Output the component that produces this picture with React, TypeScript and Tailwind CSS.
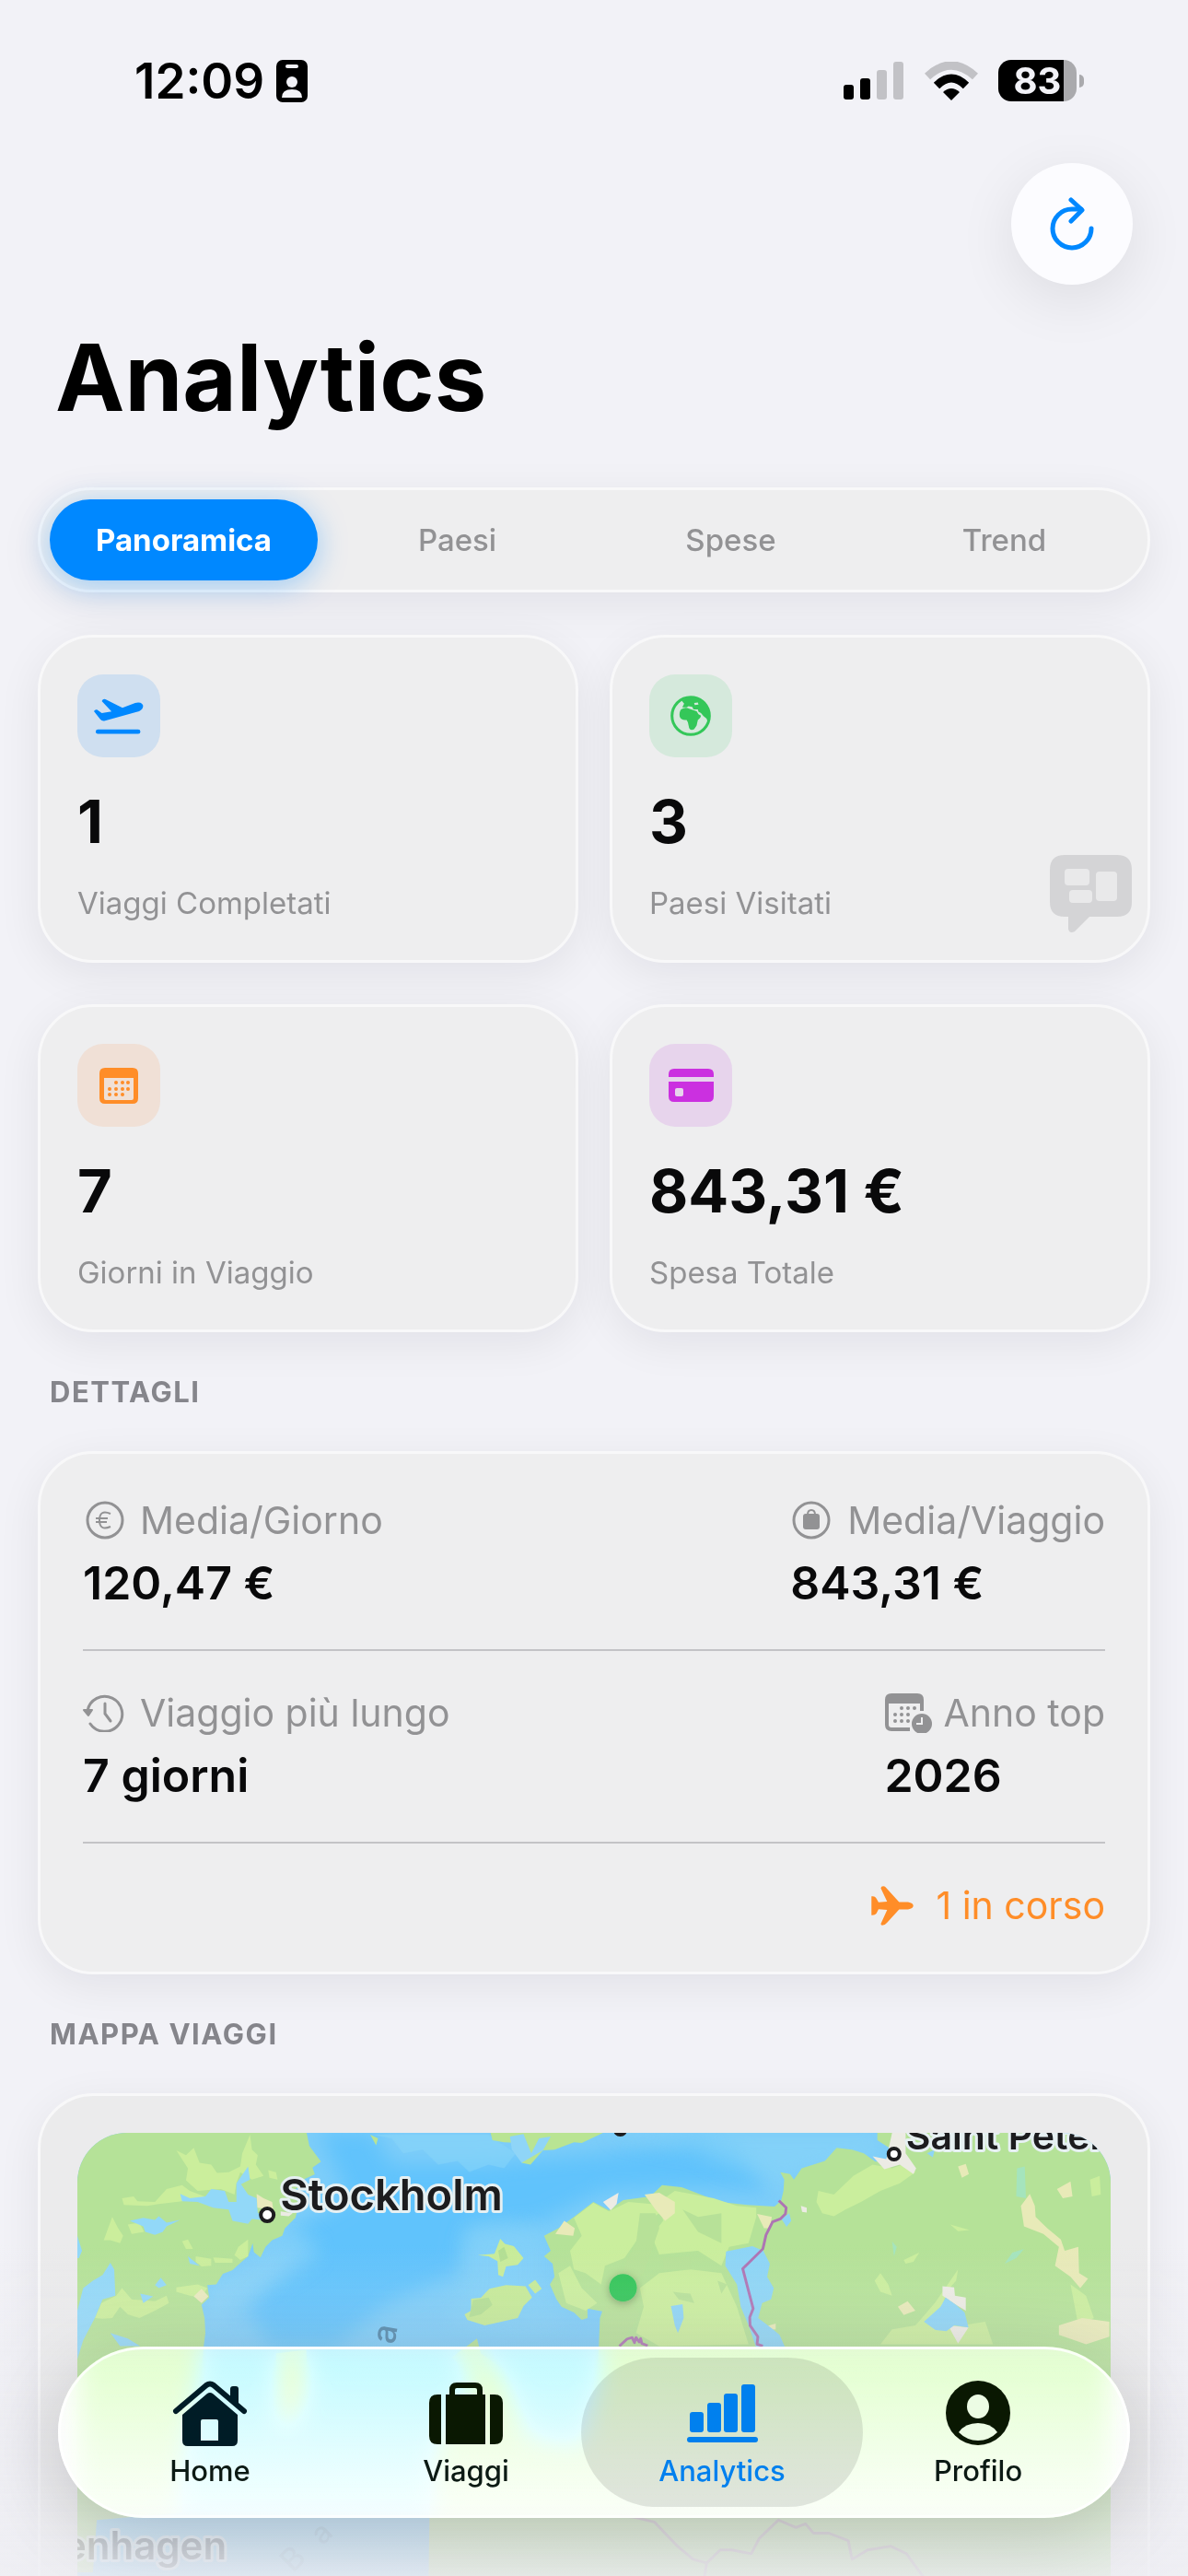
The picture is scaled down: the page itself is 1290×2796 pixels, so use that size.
import { ReactNode, useState } from "react";

const tabs = ["Panoramica", "Paesi", "Spese", "Trend"];

function StatusBar() {
  return (
    <div className="flex h-[177px] items-center justify-between pl-[146px] pr-[113px] pb-[2px]">
      <div className="flex items-center gap-[13px]">
        <span className="text-[53px] leading-[64px] font-semibold text-black">12:09</span>
        <svg className="h-[46px] w-[34px]" viewBox="0 0 34 46">
          <rect width="34" height="46" rx="7" />
          <rect x="10" y="5" width="14" height="4" rx="2" fill="#f2f2f7" />
          <circle cx="17" cy="24" r="6" fill="#f2f2f7" />
          <path d="M6 41q0-9 11-9t11 9z" fill="#f2f2f7" />
        </svg>
      </div>
      <div className="flex items-center gap-[22px]">
        <svg className="h-[42px] w-[66px]" viewBox="0 0 66 42">
          <rect y="25" width="11" height="16" rx="3" />
          <rect x="18" y="18" width="11" height="23" rx="3" />
          <rect x="36" y="9" width="11" height="32" rx="3" fill="#c2c2c6" />
          <rect x="54" width="11" height="41" rx="3" fill="#c2c2c6" />
        </svg>
        <svg className="h-[42px] w-[58px]" viewBox="0 0 58 42">
          <path d="M3 16Q29-8 55 16" fill="none" stroke="#c2c2c6" strokeWidth="9" />
          <path d="M13 26Q29 10 45 26" fill="none" stroke="#000" strokeWidth="9" />
          <path d="M29 42L20 33Q29 25 38 33z" />
        </svg>
        <div className="flex items-center gap-[3px]">
          <div className="flex h-[45px] w-[85px] items-center justify-center rounded-[14px] bg-linear-to-r from-black from-84% to-[#aaaaad] to-84% text-[40px] leading-[45px] font-bold text-[#f2f2f7]">
            83
          </div>
          <div className="h-[14px] w-[5px] rounded-r-full bg-[#aaaaad]" />
        </div>
      </div>
    </div>
  );
}

function PlaneTakeoffIcon() {
  return (
    <svg className="h-[39px] w-[54px]" viewBox="0 0 164 118" fill="currentColor">
      <path d="M0 42Q3 36 10 37L26 48 58 43 26 9Q30 0 38 3L94 31 136 15Q156 10 162 23 163 35 149 42L34 74Q26 75 21 69z" />
      <rect x="6" y="102" width="147" height="15" rx="7" />
    </svg>
  );
}

function GlobeIcon() {
  return (
    <svg className="h-[44px] w-[44px]" viewBox="0 0 130 130" fill="currentColor">
      <circle cx="65" cy="65" r="60" fill="none" stroke="currentColor" strokeWidth="9" />
      <path d="M34 44Q48 36 60 42L84 50 90 60 98 64Q98 72 88 78L84 96 76 108Q64 114 60 104L56 86 52 78Q34 80 30 68 27 54 34 44z" />
      <path
        fillRule="evenodd"
        d="M36 16Q64 0 90 10 126 24 126 66L121 84Q118 82 116 74L106 66 98 56 90 52 88 44 74 44 70 36 58 34 52 38 38 38 44 26zM76 24l12-2 2 7-12 1z"
      />
    </svg>
  );
}

function CalendarIcon() {
  return (
    <svg className="h-[39px] w-[42px]" viewBox="0 0 42 39" fill="currentColor">
      <path
        fillRule="evenodd"
        d="M6 0h30q6 0 6 6v27q0 6-6 6H6q-6 0-6-6V6q0-6 6-6zM5 11v22q0 2 2 2h28q2 0 2-2V11z"
      />
      <path
        d="M18 16h0M25 16h0M31 16h0M11 23h0M18 23h0M25 23h0M31 23h0M11 29h0M18 29h0M25 29h0"
        stroke="currentColor"
        strokeWidth="4"
        strokeLinecap="round"
      />
    </svg>
  );
}

function CreditCardIcon() {
  return (
    <svg className="h-[36px] w-[49px]" viewBox="0 0 49 36" fill="currentColor">
      <path d="M6 0h37q6 0 6 6v3H0V6q0-6 6-6z" />
      <path fillRule="evenodd" d="M0 14h49v16q0 6-6 6H6q-6 0-6-6zm9 7q-2 0-2 2v5q0 2 2 2h5q2 0 2-2v-5q0-2-2-2z" />
    </svg>
  );
}

function EuroCircleIcon() {
  return (
    <svg className="h-[42px] w-[46px]" viewBox="0 0 46 42" fill="none" stroke="currentColor">
      <circle cx="24" cy="21" r="19" strokeWidth="3" />
      <path d="M30 14Q18 9 18 21T30 28M14 19h13M14 23h12" strokeWidth="2" />
    </svg>
  );
}

function BagCircleIcon() {
  return (
    <svg className="h-[42px] w-[46px]" viewBox="0 0 46 42">
      <circle cx="23" cy="21" r="19" fill="none" stroke="currentColor" strokeWidth="3" />
      <rect x="14" y="14" width="18" height="17" rx="3" fill="currentColor" />
      <path d="M19 15q0-5 4-5t4 5" fill="none" stroke="currentColor" strokeWidth="2" />
    </svg>
  );
}

function HistoryIcon() {
  return (
    <svg className="h-[42px] w-[46px]" viewBox="0 0 46 42" fill="none" stroke="currentColor" strokeWidth="3" strokeLinecap="round">
      <path d="M5 19A19 19 0 1 1 8 33" />
      <path d="M24 11v11l6 8" />
      <path d="M1 18h9l-4 6z" fill="currentColor" strokeWidth="2" strokeLinejoin="round" />
    </svg>
  );
}

function CalendarClockIcon() {
  return (
    <svg className="-mr-[4px] h-[43px] w-[52px]" viewBox="0 0 52 43" fill="currentColor">
      <path d="M8 0h28q7 0 7 7v12h-4v-8H5v23q0 3 3 3h20v4H8q-7 0-7-7V7q0-7 7-7z" />
      <path
        d="M19 16h0M26 16h0M33 16h0M12 23h0M19 23h0M26 23h0M12 30h0M19 30h0M26 30h0"
        stroke="currentColor"
        strokeWidth="4"
        strokeLinecap="round"
      />
      <circle cx="41" cy="33" r="11" />
      <path d="M41 26v7h-6" fill="none" stroke="#eeeeef" strokeWidth="2" />
    </svg>
  );
}

function PlaneIcon() {
  return (
    <svg className="h-[43px] w-[46px]" viewBox="0 0 112 106" fill="currentColor">
      <path d="M0 28Q9 26 13 33L19 44 42 42 25 6Q26-1 35 1 38 2 42 8L74 43H98Q112 46 112 53T98 63L74 63 42 98Q36 106 27 105 24 103 26 99L42 64 19 62 13 74Q9 79 0 78z" />
    </svg>
  );
}

type StatCardProps = { icon: ReactNode; tile: string; value: string; label: string };

function StatCard({ icon, tile, value, label }: StatCardProps) {
  return (
    <div className="rounded-[60px] border-[3px] border-[#f8f8f9] bg-[#eeeeef] p-[40px] shadow-[0_12px_48px_rgba(0,0,30,0.07)]">
      <div className={`flex h-[90px] w-[90px] items-center justify-center rounded-[28px] ${tile}`}>{icon}</div>
      <p className="mt-[32px] text-[65px] leading-[76px] font-bold text-[#09090a]">{value}</p>
      <p className="mt-[28px] text-[33px] leading-[44px] text-[#929294]">{label}</p>
    </div>
  );
}

type DetailProps = { icon: ReactNode; label: string; value: string };

function Detail({ icon, label, value }: DetailProps) {
  return (
    <div>
      <dt className="flex items-center gap-[16px] text-[41px] leading-[54px] text-[#929294]">
        {icon}
        {label}
      </dt>
      <dd className="mt-[9px] text-[50px] leading-[64px] font-semibold text-[#09090a]">{value}</dd>
    </div>
  );
}

function SectionTitle({ children }: { children: ReactNode }) {
  return <h2 className="pl-[13px] text-[31px] leading-[37px] font-bold tracking-wider text-[#85858b]">{children}</h2>;
}

function TravelMap() {
  return (
    <svg className="block h-auto w-full" viewBox="0 0 1121 640" fontFamily="Inter, sans-serif">
      <defs>
        <filter id="soft">
          <feGaussianBlur stdDeviation="26" />
        </filter>
        <filter id="dotShadow" x="-50%" y="-50%" width="200%" height="200%">
          <feDropShadow dx="0" dy="2" stdDeviation="5" floodOpacity="0.3" />
        </filter>
      </defs>
      <rect width="1121" height="640" fill="#7dcdf9" />
      <g transform="scale(.4209 .4057) translate(-200 -385)">
        {/* deep water */}
        <g fill="#60c3fc" filter="url(#soft)">
          <path d="M820 380L960 380 1010 470 1250 470 1560 440 1800 400 1900 430 1980 540 1800 530 1560 540 1400 620 1200 640 1180 760 1000 840 860 960 700 960 640 860 720 760 760 640 900 560z" />
        </g>
        <path d="M760 640L830 700 760 760 660 800 580 860 540 940 530 800 640 740z" fill="#8ad3f8" opacity=".7" filter="url(#soft)" />
        <g fill="#8ad6f8" opacity=".5">
          <path d="M960 390L1010 400 1040 440 1090 430 1130 470 1180 460 1210 490 1260 470 1300 480 1330 440 1260 390z" />
          <path d="M1200 640L1290 620 1400 650 1400 800 1480 900 1400 920 1200 910 1140 880 1200 800z" opacity=".7" filter="url(#soft)" />
          <path d="M1560 385L1700 420 1790 430 1860 470 1990 500 2010 570 2040 500 2280 450 2270 385z" filter="url(#soft)" />
        </g>

        {/* Sweden */}
        <path
          fill="#b5e298"
          d="M190 380H790L798 420 828 462 806 478 812 496 786 508 770 530 745 545 772 572 762 612 735 640 728 660 702 672 685 690 672 718 655 704 652 680 640 715 612 740 600 752 575 762 558 790 535 792 540 825 520 845 528 880 530 920 525 960 520 1040 500 1120 480 1250 470 1400 250 1420 240 1560H190z"
        />
        <g fill="#cbee9c">
          <path d="M455 432L480 445 500 425 515 465 545 470 560 492 590 490 620 475 625 440 645 390 650 430 665 445 660 470 680 500 650 510 620 490 610 520 605 550 570 535 510 540 480 512 485 480z" />
          <path d="M315 560L345 555 355 568 400 570 430 535 470 525 490 540 540 560 500 560 470 568 410 575 380 580 320 578z" />
          <path d="M268 672L290 610 305 640 318 660 310 680 285 672zM330 630L360 625 372 650 340 655zM470 675L485 670 498 695 480 695zM505 715L545 722 545 740 520 742 505 730zM550 718L600 722 600 732 555 732z" />
          <path d="M615 690L640 670 640 715 620 725 605 712zM692 485L712 490 716 510 695 505z" />
          <path d="M245 880L262 840 300 820 315 800 340 830 400 835 430 820 436 840 400 860 360 880 330 870 310 850 290 880 265 882z" />
          <path d="M455 798L510 790 535 800 520 825 490 820 455 810z" />
        </g>
        <g fill="#92d8f8">
          <path d="M465 548L490 560 530 555 545 535 580 540 590 570 610 570 610 520 640 475 645 510 622 522 640 550 662 560 665 600 690 600 700 620 650 615 640 628 600 620 590 590 550 585 510 570 470 568z" />
          <path d="M335 620L370 612 400 618 410 608 430 625 465 618 430 635 420 650 400 658 375 650 370 635zM200 660L212 700 204 720 200 720z" />
          <path d="M200 860L215 800 240 780 265 765 285 732 295 750 298 820 265 830 245 880 215 940 200 990zM362 815L395 822 370 840zM400 792L415 772 430 792 410 800zM285 920L330 935 362 955 310 955zM485 715L515 740 490 735z" />
        </g>
        <path d="M662 548L680 560 702 570 705 590 664 585zM500 822L520 802 538 822 520 840z" fill="#e9e9bd" />

        {/* Gotland */}
        <path d="M712 975L790 965 795 1080 760 1170 720 1180 712 1100z" fill="#c6ec99" />

        {/* Finland and the islands */}
        <path d="M1265 385H1555L1500 412 1480 410 1430 430 1400 432 1368 470 1345 465 1358 440 1332 440 1342 412 1300 410 1270 405zM955 390L975 400 970 418z" fill="#b9e493" />
        <path d="M1315 395L1350 388 1370 440 1390 400 1420 395 1400 432 1345 465 1320 430z" fill="#8fd5f7" />
        <path d="M1232 712L1275 708 1290 668 1302 682 1325 688 1350 720 1335 738 1305 742 1297 770 1285 765 1283 728 1260 715z" fill="#c8ec99" />
        <path d="M1215 828L1240 826 1262 802 1305 792 1355 795 1372 825 1350 848 1335 880 1280 893 1250 900 1205 885 1198 870 1215 860zM1362 792L1380 778 1397 802 1380 815z" fill="#c5ea97" />
        <path d="M1285 700L1300 690 1310 720 1290 730zM1220 832L1260 825 1270 845 1240 870 1210 878z" fill="#b3df93" />

        {/* Estonia and Russia */}
        <path
          fill="#b5e298"
          d="M1403 660L1440 640 1480 610 1530 570 1570 592 1607 565 1677 555 1707 525 1757 530 1807 550 1857 570 1927 578 1997 582 2014 566 2020 540 2022 510 2012 490 2037 495 2047 510 2067 480 2097 470 2127 460 2157 425 2197 430 2227 440 2257 462 2300 460 2300 430 2262 405 2262 385H2900V1600H1105L1110 1240 1400 1200 1500 1220 1540 1060 1547 880 1553 862 1515 855 1515 880 1500 885 1480 865 1448 850 1435 830 1418 790 1430 770 1425 735 1403 715 1420 700z"
        />
        {/* Latvian coast */}
        <path d="M1110 1240L1215 1040 1165 985 1230 935 1240 975 1300 1020 1370 1200 1400 1260z" fill="#b5e298" />
        <g fill="#caee9d">
          <path d="M1480 612L1530 572 1570 595 1620 570 1680 575 1700 600 1670 620 1650 660 1610 720 1560 740 1550 790 1510 760 1480 750 1470 700 1500 660z" />
          <path d="M1700 570L1740 540 1840 560 1900 580 1950 585 1950 610 1930 680 1880 690 1860 740 1800 700 1700 710 1680 660 1710 620z" />
          <path d="M1700 760L1780 750 1860 760 1900 850 1930 950 1700 955 1640 920 1660 850 1650 800zM1440 760L1470 740 1500 800 1540 840 1510 860 1460 840z" />
          <path d="M2105 570L2110 540 2150 550 2200 500 2250 470 2300 480 2340 465 2360 490 2320 520 2270 540 2220 570 2180 590 2150 608 2120 600z" />
          <path d="M2255 780L2270 760 2290 790 2300 820 2270 810zM2270 950L2300 910 2360 900 2410 840 2450 780 2470 750 2465 780 2440 810 2430 850 2480 900 2540 890 2560 950zM2760 790L2800 820 2820 880 2780 900zM2810 510L2835 500 2838 550 2815 555zM2330 725L2370 705 2355 730 2335 735zM2450 630L2500 645 2470 648z" />
        </g>
        <g fill="#b7e198">
          <path d="M1650 600L1690 600 1700 640 1680 700 1660 760 1600 800 1610 740 1640 680zM1760 590L1800 610 1860 600 1860 680 1800 650zM1710 720L1780 715 1780 750 1710 750zM1735 810L1780 815 1790 840 1750 830z" />
          <path d="M1560 850L1620 830 1650 870 1600 950 1550 950zM1850 780L1875 790 1860 815z" />
        </g>
        <g fill="#e8eab8">
          <path d="M1662 550L1700 545 1740 570 1740 600 1715 620 1690 590zM1432 655L1455 620 1482 640 1478 660zM1952 602L1990 610 1985 640 1970 640zM1965 905L2000 895 2000 910 1970 912z" />
          <path d="M2632 580L2655 548 2668 580 2670 610 2700 640 2735 670 2745 700 2780 690 2782 760 2805 775 2785 800 2760 770 2720 740 2730 690 2690 655 2640 635zM2725 535L2760 515 2765 555 2740 560zM2470 475L2490 468 2498 495 2480 505zM2315 850L2340 835 2360 860 2330 872zM2730 900L2790 880 2860 890 2860 930 2800 950 2730 925z" />
        </g>
        <path d="M2250 448L2285 455 2300 385H2335L2335 440 2362 480 2355 495 2320 470 2280 482zM2430 795L2460 798 2462 820 2490 825 2490 860 2465 845 2430 820zM2445 900L2497 905 2470 948 2455 920zM1555 570L1595 545 1590 575 1575 592zM2065 580L2080 585 2080 598 2068 596zM724 595L755 600 745 608 724 606z" fill="#ecebe4" />
        <g fill="#8dd5f6">
          <path d="M1872 702L1940 688 1968 700 1985 735 1978 770 1995 800 1988 830 1965 840 1955 880 1990 908 2010 925 2025 960H1950L1930 900 1910 850 1900 790 1870 740z" />
          <path d="M1730 848L1760 843 1763 880 1748 920 1740 900zM2382 890L2425 850 2438 825 2465 845 2487 865 2497 905 2460 900 2440 915 2412 912zM2015 615L2035 600 2040 620 2028 636zM2390 440L2410 430 2405 450z" />
          <path d="M2622 480L2642 475 2645 560 2620 555zM2300 675L2312 690 2305 715zM2590 735L2610 705 2640 695 2620 720z" fill="#a5e4bd" />
        </g>
        <g fill="none" stroke="#ad74b4" strokeWidth="7" strokeLinejoin="round">
          <path d="M2008 566L2027 585 2025 602 2012 615 1992 623 1975 658 1967 695 1915 748 1942 855 1933 878 1934 900 1954 930 1952 950 1967 955" />
          <path d="M1597 955L1617 936 1630 932 1636 946 1640 932 1648 944 1652 935 1655 948 1670 954" />
          <path d="M1597 1408L1637 1413 1687 1425 1747 1490 1787 1525 1822 1535 1812 1600M1822 1535L1857 1500 1887 1500 1937 1510 1957 1470 2007 1420 2052 1440 2077 1430 2097 1455 2137 1455 2187 1475 2197 1525 2237 1500 2297 1490 2337 1510 2400 1600" opacity=".6" />
        </g>
      </g>

      <g fill="#fff" stroke="#1c1c1e" strokeWidth="4">
        <circle cx="206" cy="89" r="7" />
        <circle cx="886" cy="23" r="6" />
        <circle cx="589" cy="-4" r="6" />
      </g>
      <circle cx="592" cy="168" r="15" fill="#30c558" filter="url(#dotShadow)" />
      <g fill="#1c1c1e" stroke="#e6f0f2" strokeWidth="6" strokeLinejoin="round" paintOrder="stroke" fontWeight="600">
        <text x="220" y="84" fontSize="47">
          Stockholm
        </text>
        <text x="899" y="18" fontSize="41">
          Saint Peter
        </text>
        <text x="162" y="463" fontSize="42" textAnchor="end" opacity=".7">
          Copenhagen
        </text>
      </g>
      <g fill="#4f86aa" fontWeight="500">
        <text transform="translate(344 230) rotate(-80)" fontSize="36">
          a
        </text>
        <text transform="translate(266 448) rotate(-45)" fontSize="32" opacity=".4">
          a
        </text>
        <text transform="translate(234 478) rotate(-45)" fontSize="34" opacity=".4">
          B
        </text>
      </g>
    </svg>
  );
}

const navItems = [
  {
    name: "Home",
    icon: (
      <svg className="h-[72px] w-[82px]" viewBox="0 0 82 72" fill="#001c26">
        <path d="M4 34L37 6q4-3 8 0l33 28" fill="none" stroke="#001c26" strokeWidth="6" strokeLinecap="round" strokeLinejoin="round" />
        <path d="M63 22V10q0-3 3-3h3q3 0 3 3v20z" />
        <path fillRule="evenodd" d="M11 38L38 15q3-2 6 0l27 23v28q0 6-6 6H17q-6 0-6-6zM33 43q-2 0-2 2v21h19V45q0-2-2-2z" />
      </svg>
    ),
  },
  {
    name: "Viaggi",
    icon: (
      <svg className="h-[67px] w-[80px]" viewBox="0 0 80 67" fill="#0a1802">
        <path d="M13 13v54H9q-9 0-9-9V22q0-9 9-9zM18 13h43v54H18zM66 13h5q9 0 9 9v36q0 9-9 9h-5z" />
        <path d="M25 15V8q0-5 5-5h20q5 0 5 5v7" fill="none" stroke="#0a1802" strokeWidth="6" />
      </svg>
    ),
  },
  {
    name: "Analytics",
    icon: (
      <svg className="h-[63px] w-[77px]" viewBox="0 0 77 63" fill="currentColor">
        <rect x="3" y="30" width="15" height="22" rx="3" />
        <rect x="22" y="20" width="15" height="32" rx="3" />
        <rect x="40" y="10" width="15" height="42" rx="3" />
        <rect x="59" width="15" height="52" rx="3" />
        <rect y="57" width="77" height="6" rx="3" />
      </svg>
    ),
  },
  {
    name: "Profilo",
    icon: (
      <svg className="h-[70px] w-[70px]" viewBox="0 0 70 70">
        <circle cx="35" cy="35" r="35" fill="#0a1802" />
        <ellipse cx="35" cy="28" rx="12" ry="13" fill="#ecfce4" />
        <path d="M14 56Q21 46 35 46T56 56Q47 65 35 65T14 56z" fill="#ecfce4" />
      </svg>
    ),
  },
];

function BottomNav() {
  return (
    <nav className="fixed inset-x-[63px] bottom-[63px] flex rounded-full border-[3px] border-white/80 bg-linear-to-b from-white/60 to-white/80 p-[9px] shadow-[0_20px_80px_rgba(0,0,0,0.16)] backdrop-blur-[14px] backdrop-brightness-110 backdrop-saturate-200">
      {navItems.map((item) => {
        const current = item.name === "Analytics";
        return (
          <a
            key={item.name}
            href="#"
            aria-current={current ? "page" : undefined}
            className={`-ml-[28px] flex h-[162px] flex-1 flex-col items-center rounded-full pt-[24px] text-[31px] leading-[36px] font-medium first:ml-0 ${
              current ? "bg-black/10 text-[#0080ee]" : "text-[#0c1a14]"
            }`}
          >
            <span className="flex h-[72px] items-center">{item.icon}</span>
            <span className="mt-[9px]">{item.name}</span>
          </a>
        );
      })}
    </nav>
  );
}

export default function App() {
  const [tab, setTab] = useState("Panoramica");

  return (
    <div className="relative h-screen overflow-hidden bg-[#f2f2f7] font-[Inter,sans-serif]">
      <StatusBar />
      <main className="px-[41px]">
        <div className="flex justify-end pr-[19px]">
          <button
            aria-label="Aggiorna"
            className="flex h-[132px] w-[132px] items-center justify-center rounded-full bg-[#fcfcff] text-[#0088ff] shadow-[0_16px_64px_rgba(0,0,0,0.09)]"
          >
            <svg className="h-[58px] w-[48px]" viewBox="0 0 48 58" fill="none" stroke="currentColor" strokeWidth="5" strokeLinecap="round" strokeLinejoin="round">
              <path d="M45 34A21 21 0 1 1 24 13H34" />
              <path d="M23 3L35 14 23 26" />
            </svg>
          </button>
        </div>
        <h1 className="mt-[38px] pl-[19px] text-[101px] leading-[124px] font-bold text-black">Analytics</h1>

        <div className="mt-[58px] flex gap-[6px] rounded-[60px] border-[3px] border-[#f8f8f9] bg-[#eeeeef] p-[10px] shadow-[0_12px_48px_rgba(0,0,30,0.07)]">
          {tabs.map((name) => (
            <button
              key={name}
              onClick={() => setTab(name)}
              className={`h-[88px] flex-1 rounded-[44px] text-[33px] leading-[40px] ${
                tab === name
                  ? "bg-[#0088ff] font-bold text-white shadow-[0_6px_32px_rgba(0,136,255,0.35)]"
                  : "font-medium text-[#929294]"
              }`}
            >
              {name}
            </button>
          ))}
        </div>

        <div className="mt-[46px] grid grid-cols-2 gap-x-[34px] gap-y-[45px]">
          <StatCard icon={<PlaneTakeoffIcon />} tile="bg-[#cfdff0] text-[#0088ff]" value="1" label="Viaggi Completati" />
          <StatCard icon={<GlobeIcon />} tile="bg-[#d5e9dc] text-[#34c759]" value="3" label="Paesi Visitati" />
          <StatCard icon={<CalendarIcon />} tile="bg-[#f0e0d6] text-[#ff8d28]" value="7" label="Giorni in Viaggio" />
          <StatCard icon={<CreditCardIcon />} tile="bg-[#e7d4ec] text-[#cb30e0]" value="843,31 €" label="Spesa Totale" />
        </div>

        <div className="mt-[46px] flex flex-col gap-[46px]">
          <SectionTitle>DETTAGLI</SectionTitle>
          <dl className="rounded-[60px] border-[3px] border-[#f8f8f9] bg-[#eeeeef] px-[46px] py-[45px] shadow-[0_12px_48px_rgba(0,0,30,0.07)]">
            <div className="flex justify-between border-b-2 border-[#c3c3c6] pb-[40px]">
              <Detail icon={<EuroCircleIcon />} label="Media/Giorno" value="120,47 €" />
              <Detail icon={<BagCircleIcon />} label="Media/Viaggio" value="843,31 €" />
            </div>
            <div className="flex justify-between border-b-2 border-[#c3c3c6] pt-[40px] pb-[40px]">
              <Detail icon={<HistoryIcon />} label="Viaggio più lungo" value="7 giorni" />
              <Detail icon={<CalendarClockIcon />} label="Anno top" value="2026" />
            </div>
            <div className="flex items-center justify-end gap-[24px] pt-[40px] text-[41px] leading-[54px] text-[#ff8d28]">
              <PlaneIcon />1 in corso
            </div>
          </dl>

          <SectionTitle>MAPPA VIAGGI</SectionTitle>
          <div className="rounded-[60px] border-[3px] border-[#f8f8f9] bg-[#ebebec] p-[40px] shadow-[0_12px_48px_rgba(0,0,30,0.07)]">
            <div className="overflow-hidden rounded-[54px]">
              <TravelMap />
            </div>
          </div>
        </div>
      </main>

      <button aria-label="Feedback" className="absolute top-[928px] right-[61px]">
        <svg className="h-[84px] w-[89px]" viewBox="0 0 89 84" fill="#d4d4d6">
          <path d="M16 0h57q16 0 16 16v35q0 16-16 16H43L27 83q-6 3-7-3V67h-4Q0 67 0 51V16Q0 0 16 0z" />
          <g fill="#e9e9ea">
            <rect x="16" y="15" width="27" height="18" rx="4" />
            <rect x="21" y="38" width="25" height="14" rx="4" />
            <rect x="50" y="18" width="23" height="32" rx="4" />
          </g>
        </svg>
      </button>

      <div className="pointer-events-none fixed inset-x-0 bottom-0 h-[360px] bg-linear-to-b from-[#e6e6eb]/0 via-[#e6e6eb]/30 to-[#eeeef3]/90" />
      <BottomNav />
    </div>
  );
}
